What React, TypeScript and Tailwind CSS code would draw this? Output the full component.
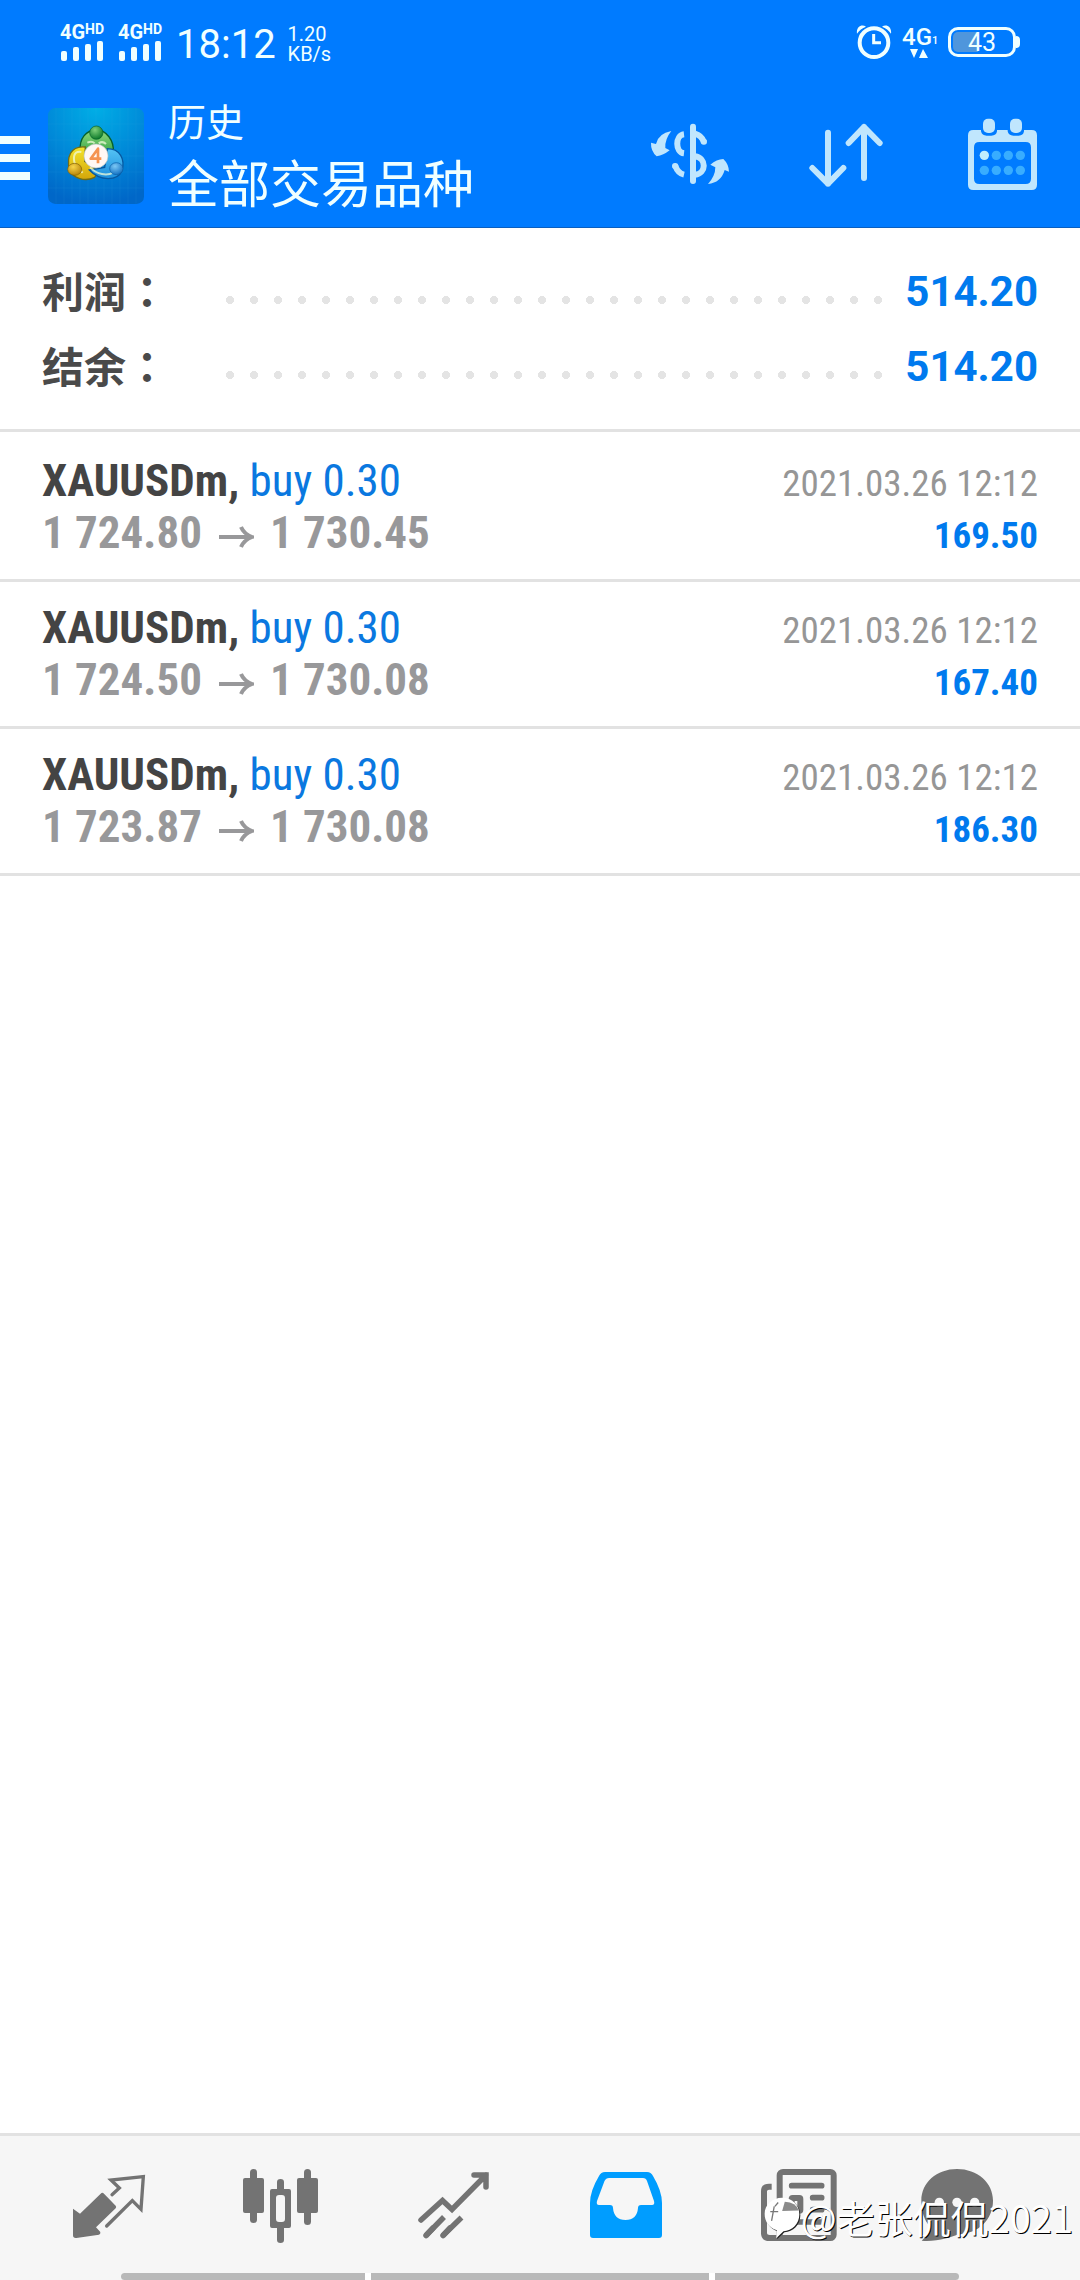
import type { ReactNode } from "react";

const deals = [
  { open: "1 724.80", close: "1 730.45", time: "2021.03.26 12:12", profit: "169.50" },
  { open: "1 724.50", close: "1 730.08", time: "2021.03.26 12:12", profit: "167.40" },
  { open: "1 723.87", close: "1 730.08", time: "2021.03.26 12:12", profit: "186.30" },
];

const totals = [
  { label: "利润", value: "514.20" },
  { label: "结余", value: "514.20" },
];

function Signal() {
  return (
    <div className="w-[46px] font-bold">
      <div className="flex items-start text-[20px] leading-[18px]">
        <span>4G</span>
        <span className="text-[14px] leading-[12px]">HD</span>
      </div>
      <svg viewBox="0 0 46 20" className="block h-[20px] w-[46px]" fill="currentColor" aria-hidden="true">
        <rect x="1" y="10" width="6" height="10" rx="2" />
        <rect x="13" y="6" width="6" height="14" rx="2" />
        <rect x="25" y="3" width="6" height="17" rx="2" />
        <rect x="37" y="0" width="6" height="20" rx="2" />
      </svg>
    </div>
  );
}

function StatusBar() {
  return (
    <div className="flex h-[84px] items-center justify-between pl-[60px] pr-[60px]">
      <div className="flex items-center">
        <div className="flex gap-3">
          <Signal />
          <Signal />
        </div>
        <span className="ml-[12px] mt-[6px] text-[40px] leading-[40px]">18:12</span>
        <div className="ml-[12px] mt-[4px] text-[20px] leading-[20px]">
          <div>1.20</div>
          <div>KB/s</div>
        </div>
      </div>
      <div className="flex items-center">
        <svg viewBox="108 72 108 108" className="h-[36px] w-[36px]" fill="none" stroke="currentColor" aria-hidden="true">
          <circle cx="162" cy="128" r="43" strokeWidth="12" />
          <path d="M161 102V128H183" strokeWidth="9" />
          <path d="M111 101C108 82 124 70 138 80Q121 86 111 101ZM213 101C216 82 200 70 186 80Q203 86 213 101Z" fill="currentColor" stroke="none" />
        </svg>
        <div className="ml-[10px] w-[34px]">
          <div className="flex items-end text-[24px] font-medium leading-[22px]">
            <span>4G</span>
            <span className="text-[11px] leading-[14px]">1</span>
          </div>
          <svg viewBox="0 0 34 10" className="block h-[10px] w-[34px]" fill="currentColor" aria-hidden="true">
            <path d="M8 1H16L12 10ZM17 10H26L21 1Z" />
          </svg>
        </div>
        <div className="ml-[12px] flex items-center">
          <div className="flex h-[30px] w-[68px] items-center justify-center rounded-[10px] border-[3px] border-current bg-[linear-gradient(90deg,#4f96dc_44%,transparent_44%)] bg-clip-content p-[2px] text-[25px] leading-none">
            43
          </div>
          <span className="h-[12px] w-[4px] rounded-r-full bg-current" />
        </div>
      </div>
    </div>
  );
}

function AppLogo() {
  return (
    <svg viewBox="0 0 288 288" className="h-[96px] w-[96px] shrink-0" aria-hidden="true">
      <defs>
        <radialGradient id="tile" cx=".5" cy="0" r="1">
          <stop offset="0" stopColor="#00aee6" />
          <stop offset=".55" stopColor="#0088d8" />
          <stop offset="1" stopColor="#0067c8" />
        </radialGradient>
        <linearGradient id="green" x1="0" y1="0" x2="0" y2="1">
          <stop offset="0" stopColor="#8fd97a" />
          <stop offset="1" stopColor="#179238" />
        </linearGradient>
        <linearGradient id="gold" x1="0" y1="0" x2="0" y2="1">
          <stop offset="0" stopColor="#f4e42c" />
          <stop offset="1" stopColor="#d3a60a" />
        </linearGradient>
        <linearGradient id="sky" x1="0" y1="0" x2="0" y2="1">
          <stop offset="0" stopColor="#55c3f5" />
          <stop offset="1" stopColor="#1d8fdc" />
        </linearGradient>
        <radialGradient id="greenBall" cx=".4" cy=".3" r=".7">
          <stop offset="0" stopColor="#7fd07a" />
          <stop offset="1" stopColor="#0d7a2a" />
        </radialGradient>
        <radialGradient id="goldBall" cx=".4" cy=".3" r=".7">
          <stop offset="0" stopColor="#f7d54a" />
          <stop offset="1" stopColor="#b9860a" />
        </radialGradient>
        <radialGradient id="skyBall" cx=".4" cy=".3" r=".7">
          <stop offset="0" stopColor="#7cc8f5" />
          <stop offset="1" stopColor="#1674c4" />
        </radialGradient>
      </defs>
      <rect width="288" height="288" rx="22" fill="url(#tile)" />
      <path d="M24 0V288M48 0V288M72 0V288M96 0V288M120 0V288M144 0V288M168 0V288M192 0V288M216 0V288M240 0V288M264 0V288M0 48H288M0 96H288M0 144H288M0 192H288M0 240H288" stroke="#3db4f0" strokeOpacity=".16" strokeWidth="2" />
      <g strokeWidth="4">
        <path d="M97 128C93 92 114 66 145 66C176 66 198 98 196 132C195 150 188 162 176 164L148 112L110 132Z" fill="url(#green)" stroke="#07622c" />
        <path d="M112 117C66 112 56 150 64 184C74 212 112 222 140 208L152 188L110 160Z" fill="url(#gold)" stroke="#716c16" />
        <path d="M178 122C216 122 232 154 222 188C208 220 156 220 124 186L170 178Z" fill="url(#sky)" stroke="#07589f" />
      </g>
      <path d="M100 132C74 128 74 154 84 176L104 194M126 178C148 200 176 204 196 194M118 104Q132 98 140 106M152 106Q164 98 174 108" fill="none" stroke="#effbd8" strokeOpacity=".75" strokeWidth="6" />
      <circle cx="145" cy="74" r="20" fill="url(#greenBall)" stroke="#07622c" strokeWidth="2" />
      <ellipse cx="80" cy="184" rx="21" ry="18" fill="url(#goldBall)" stroke="#806008" strokeWidth="2" />
      <ellipse cx="205" cy="182" rx="20" ry="18" fill="url(#skyBall)" stroke="#0b5fa8" strokeWidth="2" />
      <circle cx="144" cy="144" r="36" fill="#fff8f4" stroke="#b9c5c4" strokeWidth="2" />
      <path d="M150 166V122L128 152H160" fill="none" stroke="#f59350" strokeWidth="8" strokeLinejoin="round" />
    </svg>
  );
}

function AppBar() {
  return (
    <div className="flex h-[144px] items-center justify-between pr-[43px]">
      <div className="flex items-center">
        <button type="button" aria-label="菜单" className="mt-1 flex w-[30px] flex-col gap-[10px]">
          <span className="h-[8px] w-full bg-current" />
          <span className="h-[8px] w-full bg-current" />
          <span className="h-[8px] w-full bg-current" />
        </button>
        <div className="ml-[18px]">
          <AppLogo />
        </div>
        <div className="ml-[24px]">
          <div className="text-[38px] leading-[60px]">历史</div>
          <h1 className="text-[51px] font-normal leading-[66px]">全部交易品种</h1>
        </div>
      </div>
      <div className="flex items-center gap-20 text-[#c0e6fd]">
        <button type="button" aria-label="交易品种">
          <svg viewBox="87 93 240 210" className="block h-[70px] w-[80px]" fill="none" stroke="currentColor" aria-hidden="true">
            <path d="M219 110V273" strokeWidth="18" strokeLinecap="round" />
            <g strokeWidth="18">
              <path d="M192 133C165 136 165 187 192 190" />
              <path d="M166 228Q174 250 192 254" />
              <path d="M166 228H165" strokeLinecap="round" />
              <path d="M225 131Q244 136 252 156" />
              <path d="M251 155H252" strokeLinecap="round" />
              <path d="M225 199C260 204 260 250 225 254" />
            </g>
            <path d="M154 123Q115 130 108 162L93 158Q92 183 110 199Q130 196 149 181L136 174Q134 148 154 123Z" fill="currentColor" stroke="none" />
            <path d="M264 282Q303 278 314 240L327 245Q326 222 310 207Q290 208 271 224L286 232Q286 258 264 282Z" fill="currentColor" stroke="none" />
          </svg>
        </button>
        <button type="button" aria-label="排序">
          <svg viewBox="567 93 237 210" className="block h-[70px] w-[79px]" fill="none" stroke="currentColor" strokeWidth="18" strokeLinecap="round" strokeLinejoin="round" aria-hidden="true">
            <path d="M624 128V281M577 234L624 281L670 234M732 264V111M686 159L732 111L779 159" />
          </svg>
        </button>
        <button type="button" aria-label="日期">
          <svg viewBox="1044 78 207 240" className="block h-[80px] w-[69px]" aria-hidden="true">
            <path fillRule="evenodd" fill="currentColor" d="M1060 120H1083V124Q1086 137 1100 137H1114Q1129 137 1131 124V120H1163V124Q1166 137 1180 137H1196Q1210 137 1212 124V120H1235Q1251 120 1251 136V284Q1251 300 1235 300H1060Q1044 300 1044 284V136Q1044 120 1060 120ZM1078 156Q1062 156 1062 172V266Q1062 282 1078 282H1217Q1233 282 1233 266V172Q1233 156 1217 156Z" />
            <rect x="1089" y="86" width="36" height="43" rx="15" fill="currentColor" />
            <rect x="1170" y="86" width="36" height="43" rx="15" fill="currentColor" />
            <circle cx="1093" cy="196" r="14" fill="#c0eefd" />
            <g fill="#38adff">
              <circle cx="1129" cy="196" r="14" />
              <circle cx="1165" cy="196" r="14" />
              <circle cx="1201" cy="196" r="14" />
              <circle cx="1093" cy="241" r="14" />
              <circle cx="1129" cy="241" r="14" />
              <circle cx="1165" cy="241" r="14" />
              <circle cx="1201" cy="241" r="14" />
            </g>
          </svg>
        </button>
      </div>
    </div>
  );
}

function Tab({ label, box, active, children }: { label: string; box: string; active?: boolean; children: ReactNode }) {
  return (
    <button
      type="button"
      aria-label={label}
      aria-current={active ? "page" : undefined}
      className={active ? "flex flex-1 items-center justify-center text-[#009dff]" : "flex flex-1 items-center justify-center text-[#737373]"}
    >
      <svg viewBox={box} className="h-[78px] w-[108px]" fill="none" stroke="currentColor" aria-hidden="true">
        {children}
      </svg>
    </button>
  );
}

function TabBar() {
  return (
    <nav className="relative flex h-[147px] border-t-[3px] border-[#e2e2e2] bg-[#f6f6f6] px-[23px]">
      <Tab label="行情" box="18 57 324 234">
        <path fill="currentColor" stroke="none" d="M155 131Q160 126 165 131L200 167Q203 171 200 175L141 232L154 246Q155 253 150 254L82 264Q72 265 72 256V176L93 191Z" />
        <path strokeWidth="10" strokeLinecap="round" d="M189 134L211 114L186 90L283 80L276 178L250 152L173 228" />
      </Tab>
      <Tab label="图表" box="228 49 108 78">
        <g fill="currentColor" stroke="none">
          <rect x="244" y="58" width="21" height="35" rx="2" />
          <rect x="251" y="49" width="7" height="54" rx="3.5" />
          <path fillRule="evenodd" d="M273 69H290Q292 69 292 71V106Q292 108 290 108H273Q271 108 271 106V71Q271 69 273 69ZM280 75Q277 75 277 78V99Q277 102 280 102H283Q286 102 286 99V78Q286 75 283 75Z" />
          <path d="M278 70V62Q278 59 281.500 59Q285 59 285 62V70ZM278 107V120Q278 123 281.500 123Q285 123 285 120V107Z" />
          <rect x="298" y="58" width="21" height="35" rx="2" />
          <rect x="305" y="49" width="7" height="56" rx="3.5" />
        </g>
      </Tab>
      <Tab label="交易" box="400 49 108 78">
        <g strokeWidth="5.5">
          <path strokeLinecap="round" d="M421 100L442.500 80.500L452 89.500L486 55M474 55H486V67M426 115.500L433 108M443 115.500L450 108" />
          <path d="M426 115.500L444 97M443 115.500L461.500 97.500" />
        </g>
      </Tab>
      <Tab label="历史" box="573 49 108 78" active>
        <path fillRule="evenodd" fill="currentColor" stroke="none" d="M606 52H648Q652 52 654 56Q663 71 663 83V115Q663 118 660 118H594Q591 118 591 115V83Q591 71 600 56Q602 52 606 52ZM610 58Q607 58 605.500 61L598 81Q597 85 600 85H611Q614 85 614 88Q615 100 626.500 100Q638 100 639 88Q639 85 642 85H653Q656 85 655 81L648 61Q647 58 644 58Z" />
      </Tab>
      <Tab label="新闻" box="-15 57 324 234">
        <rect x="92" y="66" width="162" height="198" rx="10" strokeWidth="18" />
        <path strokeWidth="18" d="M68 110H60Q45 110 45 124V250Q45 264 62 264H240" />
        <path strokeWidth="17" strokeLinecap="round" d="M128 107H218M191 143H218M191 179H218M128 216H218" />
        <rect x="128" y="144" width="26" height="38" rx="3" strokeWidth="18" />
      </Tab>
      <Tab label="消息" box="54 57 324 234">
        <path fill="currentColor" stroke="none" d="M174 57C235 57 282 98 282 152C282 208 238 252 178 252C160 262 110 276 68 272C80 262 92 248 95 232C76 212 67 186 67 152C67 98 113 57 174 57Z" />
        <g fill="#f6f6f6" stroke="none">
          <circle cx="121" cy="157" r="14" />
          <circle cx="174" cy="157" r="14" />
          <circle cx="227" cy="157" r="14" />
        </g>
      </Tab>
      <div className="pointer-events-none absolute bottom-[41px] right-[7px] flex items-center text-white">
        <svg viewBox="30 145 115 135" className="h-[45px] w-[38px]" aria-hidden="true">
          <path d="M88 156C118 156 140 178 140 206C140 236 118 256 92 257L70 278L72 254C48 246 35 228 35 204C35 178 58 156 88 156Z" fill="#222" transform="translate(3 3)" />
          <path d="M88 156C118 156 140 178 140 206C140 236 118 256 92 257L70 278L72 254C48 246 35 228 35 204C35 178 58 156 88 156Z" fill="#fff" />
          <path d="M88 196L96 168Q130 170 138 194ZM104 198" fill="#8a8a8a" stroke="none" />
          <path d="M52 198H76M64 182L56 226M76 170L66 182" fill="none" stroke="#777" strokeWidth="4" />
        </svg>
        <span className="font-['Noto_Sans_CJK_SC',sans-serif] text-[38px] leading-[44px] [text-shadow:1px_1px_0_#000]">@老张侃侃2021</span>
      </div>
      <div className="pointer-events-none absolute inset-x-[121px] bottom-0 flex h-[7px] gap-[6px] overflow-hidden rounded-l-full rounded-r-full bg-white">
        <span className="flex-[244] bg-[#b9b9b9]" />
        <span className="flex-[338] bg-[#b9b9b9]" />
        <span className="flex-[244] bg-[#b9b9b9]" />
      </div>
    </nav>
  );
}

export default function App() {
  return (
    <div className="flex min-h-screen flex-col bg-white font-['Roboto','Noto_Sans_CJK_SC',sans-serif]">
      <header className="bg-[#007bff] text-[#f0ffff] shadow-[inset_0_-1px_0_#0a5fc0]">
        <StatusBar />
        <AppBar />
      </header>
      <main className="flex-1">
        <dl className="border-b-[3px] border-[#e2e2e2] px-[42px] pb-[25px] pt-[26px] text-[42px] leading-[75px]">
          {totals.map((t) => (
            <div key={t.label} className="flex h-[75px] items-center">
              <dt className="w-[176px] font-bold text-[#4a4a4a]">
                {t.label}
                <span className="font-['Noto_Sans_CJK_TC',sans-serif]" lang="zh-TW">：</span>
              </dt>
              <dd className="flex flex-1 items-center gap-[14px]">
                <span className="mt-4 h-[8px] flex-1 bg-[radial-gradient(circle,#e4e4e4_4px,transparent_4px)] bg-[length:24px_8px] bg-repeat-x" />
                <span className="font-bold text-[#007aee]">{t.value}</span>
              </dd>
            </div>
          ))}
        </dl>
        <ul className="pt-[3px] font-['Roboto_Condensed','Roboto','Noto_Sans_CJK_SC',sans-serif] leading-[52px]">
          {deals.map((d) => (
            <li key={d.open} className="border-b-[3px] border-[#e2e2e2] px-[42px] py-5">
              <div className="flex h-[52px] items-baseline justify-between">
                <span className="text-[45px] text-[#0a78e0]">
                  <b className="font-bold text-[#444444]">XAUUSDm,</b> buy 0.30
                </span>
                <span className="text-[37px] text-[#969696]">{d.time}</span>
              </div>
              <div className="flex h-[52px] items-baseline justify-between font-bold">
                <span className="flex items-center text-[45px] text-[#98989a]">
                  {d.open}
                  <svg viewBox="0 0 36 26" className="mx-4 mt-2 h-[26px] w-[36px]" fill="none" stroke="currentColor" strokeWidth="4" aria-label="至" role="img">
                    <path d="M1 13H33M23 3Q26 10 34 13Q26 16 23 23" />
                  </svg>
                  {d.close}
                </span>
                <span className="text-[37px] text-[#007aee]">{d.profit}</span>
              </div>
            </li>
          ))}
        </ul>
      </main>
      <TabBar />
    </div>
  );
}
